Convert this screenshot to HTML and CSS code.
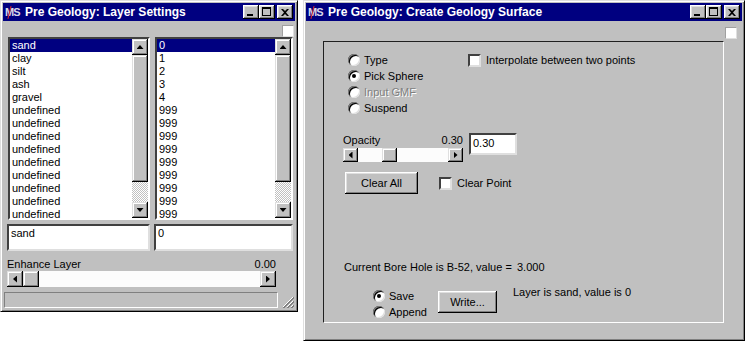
FILE: index.html
```html
<!DOCTYPE html>
<html lang="en">
<head>
    <meta charset="UTF-8">
    <meta name="viewport" content="width=device-width, initial-scale=1.0">
    <title>Pre Geology</title>
    <link rel="stylesheet" href="styles.css">
</head>
<body>
    <div class="desktop">
        <!-- Layer settings window -->
        <div class="window layerWindow">
            <div class="titleBar">
                <span class="appIcon">MS</span>
                <span class="titleText">Pre Geology: Layer Settings</span>
                <div class="titleButtons">
                    <span class="capButton minButton"></span>
                    <span class="capButton maxButton"></span>
                    <span class="capButton closeButton">
                        <svg width="8" height="7" viewBox="0 0 8 7"><path d="M0 0h2l2 2 2-2h2L5 3.5 8 7H6L4 5 2 7H0l3-3.5z"/></svg>
                    </span>
                </div>
            </div>
            <div class="client">
                <span class="cornerBox"></span>
                <div class="listRow">
                    <div class="listBox nameList">
                        <ul class="listItems">
                            <li class="selected">sand</li>
                            <li>clay</li>
                            <li>silt</li>
                            <li>ash</li>
                            <li>gravel</li>
                            <li>undefined</li>
                            <li>undefined</li>
                            <li>undefined</li>
                            <li>undefined</li>
                            <li>undefined</li>
                            <li>undefined</li>
                            <li>undefined</li>
                            <li>undefined</li>
                            <li>undefined</li>
                        </ul>
                        <div class="vScroll">
                            <span class="scrollBtn arrowUp"></span>
                            <span class="vThumb"></span>
                            <span class="ditherTrack"></span>
                            <span class="scrollBtn arrowDown"></span>
                        </div>
                    </div>
                    <div class="listBox valueList">
                        <ul class="listItems">
                            <li class="selected">0</li>
                            <li>1</li>
                            <li>2</li>
                            <li>3</li>
                            <li>4</li>
                            <li>999</li>
                            <li>999</li>
                            <li>999</li>
                            <li>999</li>
                            <li>999</li>
                            <li>999</li>
                            <li>999</li>
                            <li>999</li>
                            <li>999</li>
                        </ul>
                        <div class="vScroll">
                            <span class="scrollBtn arrowUp"></span>
                            <span class="vThumb"></span>
                            <span class="ditherTrack"></span>
                            <span class="scrollBtn arrowDown"></span>
                        </div>
                    </div>
                </div>
                <div class="editRow">
                    <div class="editBox nameEdit">sand</div>
                    <div class="editBox valueEdit">0</div>
                </div>
                <div class="sliderLabel enhanceLabel">
                    <span>Enhance Layer</span>
                    <span>0.00</span>
                </div>
                <div class="hScroll enhanceScroll">
                    <span class="scrollBtn arrowLeft"></span>
                    <span class="hThumb"></span>
                    <span class="hTrack"></span>
                    <span class="scrollBtn arrowRight"></span>
                </div>
                <div class="statusRow">
                    <div class="statusBar"></div>
                    <svg class="sizeGrip" width="12" height="12" viewBox="0 0 12 12">
                        <path d="M11 1L1 11M11 5L5 11M11 9L9 11" stroke="#fff" stroke-width="1"/>
                        <path d="M12 1L1 12M12 2L2 12M12 5L5 12M12 6L6 12M12 9L9 12M12 10L10 12" stroke="#808080" stroke-width="1"/>
                    </svg>
                </div>
            </div>
        </div>

        <!-- Create surface window -->
        <div class="window surfaceWindow">
            <div class="titleBar">
                <span class="appIcon">MS</span>
                <span class="titleText">Pre Geology: Create Geology Surface</span>
                <div class="titleButtons">
                    <span class="capButton minButton"></span>
                    <span class="capButton maxButton"></span>
                    <span class="capButton closeButton">
                        <svg width="8" height="7" viewBox="0 0 8 7"><path d="M0 0h2l2 2 2-2h2L5 3.5 8 7H6L4 5 2 7H0l3-3.5z"/></svg>
                    </span>
                </div>
            </div>
            <div class="client">
                <span class="cornerBox surfaceCorner"></span>
                <div class="frame">
                    <div class="modeRow">
                        <div class="radioGroup modeGroup">
                            <label class="radio"><span class="radioDot"></span>Type</label>
                            <label class="radio"><span class="radioDot checked"></span>Pick Sphere</label>
                            <label class="radio disabled"><span class="radioDot"></span>Input GMF</label>
                            <label class="radio"><span class="radioDot"></span>Suspend</label>
                        </div>
                        <label class="check interpolateCheck"><span class="checkBox"></span>Interpolate between two points</label>
                    </div>
                    <div class="opacityRow">
                        <div class="opacityBlock">
                            <div class="sliderLabel">
                                <span>Opacity</span>
                                <span>0.30</span>
                            </div>
                            <div class="hScroll opacityScroll">
                                <span class="scrollBtn arrowLeft"></span>
                                <span class="hTrack shortTrack"></span>
                                <span class="hThumb"></span>
                                <span class="hTrack"></span>
                                <span class="scrollBtn arrowRight"></span>
                            </div>
                        </div>
                        <div class="editBox opacityEdit">0.30</div>
                    </div>
                    <div class="clearRow">
                        <span class="pushButton clearButton">Clear All</span>
                        <label class="check clearCheck"><span class="checkBox"></span>Clear Point</label>
                    </div>
                    <div class="boreRow">
                        <span class="boreLabel">Current Bore Hole is B-52, value =</span>
                        <span>3.000</span>
                    </div>
                    <div class="saveRow">
                        <div class="radioGroup saveGroup">
                            <label class="radio"><span class="radioDot checked"></span>Save</label>
                            <label class="radio"><span class="radioDot"></span>Append</label>
                        </div>
                        <span class="pushButton writeButton">Write...</span>
                        <span class="layerInfo">Layer is sand, value is 0</span>
                    </div>
                </div>
            </div>
        </div>
    </div>
</body>
</html>
```

FILE: styles.css
```css
body {
    margin: 0;
    background: #fff;
    font-family: "Liberation Sans", Arial, sans-serif;
    font-size: 11px;
    color: #000;
}
.desktop {
    display: flex;
    align-items: flex-start;
    gap: 5px;
}
/* Win95 style window frame */
.window {
    box-sizing: border-box;
    background: #c0c0c0;
    border: 1px solid;
    border-color: #dfdfdf #000 #000 #dfdfdf;
    box-shadow: inset 1px 1px #fff, inset -1px -1px #808080;
    padding: 2px;
    display: flex;
    flex-direction: column;
}
.layerWindow {
    width: 298px;
    height: 312px;
}
.surfaceWindow {
    width: 442px;
    height: 341px;
}
.titleBar {
    height: 18px;
    background: #000080;
    color: #fff;
    display: flex;
    align-items: center;
    padding: 0 2px 0 2px;
}
.appIcon {
    width: 18px;
    font-weight: bold;
    font-size: 11px;
    letter-spacing: -1px;
    color: #d8d8e8;
    position: relative;
}
.appIcon::after {
    content: '';
    position: absolute;
    left: 4px;
    top: 0;
    width: 1px;
    height: 13px;
    background: #e02828;
    transform: rotate(14deg);
}
.titleText {
    margin-left: 2px;
    font-weight: bold;
    font-size: 12px;
}
.titleButtons {
    margin-left: auto;
    display: flex;
}
.capButton {
    width: 16px;
    height: 14px;
    box-sizing: border-box;
    background: #c0c0c0;
    box-shadow: inset -1px -1px #000, inset 1px 1px #fff, inset -2px -2px #808080, inset 2px 2px #dfdfdf;
    display: flex;
    align-items: center;
    justify-content: center;
    position: relative;
}
.minButton::after {
    content: '';
    position: absolute;
    left: 4px;
    top: 9px;
    width: 6px;
    height: 2px;
    background: #000;
}
.maxButton::after {
    content: '';
    position: absolute;
    left: 3px;
    top: 2px;
    width: 9px;
    height: 9px;
    box-sizing: border-box;
    border: 1px solid #000;
    border-top-width: 2px;
}
.closeButton {
    margin-left: 2px;
}
.client {
    display: flex;
    flex-direction: column;
}
.cornerBox {
    align-self: flex-end;
    width: 12px;
    height: 12px;
    box-sizing: border-box;
    margin: 4px 1px 0 0;
    background: #fff;
    border: 1px solid;
    border-color: #a0a0a0 #dfdfdf #dfdfdf #a0a0a0;
}
.surfaceCorner {
    margin: 6px 5px 0 0;
}
/* list boxes */
.listRow {
    display: flex;
    gap: 5px;
    margin-left: 5px;
}
.listBox {
    height: 183px;
    box-sizing: border-box;
    background: #fff;
    border: 2px solid;
    border-color: #404040 #fff #fff #404040;
    display: flex;
}
.nameList {
    width: 142px;
}
.valueList {
    width: 138px;
}
.listItems {
    list-style: none;
    margin: 0;
    padding: 0;
    flex: 1;
}
.listItems li {
    height: 13px;
    line-height: 13px;
    padding-left: 2px;
}
.listItems li.selected {
    background: #000080;
    color: #fff;
}
.vScroll {
    width: 16px;
    display: flex;
    flex-direction: column;
}
.scrollBtn {
    width: 16px;
    height: 16px;
    box-sizing: border-box;
    background: #c0c0c0;
    box-shadow: inset -1px -1px #000, inset 1px 1px #dfdfdf, inset -2px -2px #808080, inset 2px 2px #fff;
    display: flex;
    align-items: center;
    justify-content: center;
    flex-shrink: 0;
}
.scrollBtn::after {
    content: '';
    background: #000;
}
.arrowUp::after {
    width: 7px;
    height: 4px;
    clip-path: polygon(50% 0, 100% 100%, 0 100%);
}
.arrowDown::after {
    width: 7px;
    height: 4px;
    clip-path: polygon(0 0, 100% 0, 50% 100%);
}
.arrowLeft::after {
    width: 4px;
    height: 7px;
    clip-path: polygon(100% 0, 100% 100%, 0 50%);
}
.arrowRight::after {
    width: 4px;
    height: 7px;
    clip-path: polygon(0 0, 100% 50%, 0 100%);
}
.vThumb {
    height: 127px;
    background: #c0c0c0;
    box-shadow: inset -1px -1px #000, inset 1px 1px #dfdfdf, inset -2px -2px #808080, inset 2px 2px #fff;
}
.ditherTrack {
    flex: 1;
    background: repeating-conic-gradient(#fff 0 25%, #c0c0c0 0 50%) 0 0 / 2px 2px;
}
/* edit boxes */
.editRow {
    display: flex;
    gap: 4px;
    margin: 4px 0 0 4px;
}
.editBox {
    box-sizing: border-box;
    background: #fff;
    border: 2px solid;
    border-color: #404040 #dfdfdf #dfdfdf #404040;
    padding: 1px 2px;
    line-height: 13px;
}
.nameEdit {
    width: 143px;
    height: 27px;
}
.valueEdit {
    width: 139px;
    height: 27px;
}
.sliderLabel {
    display: flex;
    justify-content: space-between;
    align-items: center;
    height: 15px;
}
.enhanceLabel {
    width: 269px;
    margin: 5px 0 0 4px;
}
.hScroll {
    display: flex;
    height: 16px;
}
.enhanceScroll {
    width: 269px;
    margin-left: 4px;
}
.hThumb {
    width: 16px;
    flex-shrink: 0;
    background: #c0c0c0;
    box-shadow: inset -1px -1px #000, inset 1px 1px #dfdfdf, inset -2px -2px #808080, inset 2px 2px #fff;
}
.hTrack {
    flex: 1;
    background: #fcfcfc;
}
.statusRow {
    display: flex;
    align-items: flex-end;
    margin: 5px 0 0 1px;
}
.statusBar {
    width: 274px;
    height: 16px;
    box-sizing: border-box;
    border: 1px solid;
    border-color: #808080 #fff #fff #808080;
}
.sizeGrip {
    margin-left: 4px;
}
/* surface dialog */
.frame {
    box-sizing: border-box;
    width: 401px;
    height: 282px;
    margin: 2px 0 0 17px;
    border: 1px solid;
    border-color: #202020 #fff #fff #202020;
    display: flex;
    flex-direction: column;
}
.modeRow {
    display: flex;
    margin: 10px 0 0 24px;
}
.radioGroup {
    display: flex;
    flex-direction: column;
}
.modeGroup {
    width: 120px;
}
.radio, .check {
    display: flex;
    align-items: center;
    height: 16px;
    gap: 4px;
}
.radioDot {
    width: 12px;
    height: 12px;
    border-radius: 50%;
    background: #fff;
    box-shadow: inset 1px 1px #808080, inset -1px -1px #dfdfdf, inset 2px 2px #000;
    position: relative;
}
.radioDot.checked::after {
    content: '';
    position: absolute;
    left: 4px;
    top: 4px;
    width: 4px;
    height: 4px;
    border-radius: 50%;
    background: #000;
}
.radio.disabled {
    color: #808080;
    text-shadow: 1px 1px #fff;
}
.checkBox {
    width: 13px;
    height: 13px;
    box-sizing: border-box;
    background: #fff;
    border: 2px solid;
    border-color: #404040 #dfdfdf #dfdfdf #404040;
}
.check {
    gap: 5px;
}
.opacityRow {
    display: flex;
    align-items: flex-start;
    margin: 16px 0 0 19px;
}
.opacityBlock {
    width: 120px;
}
.opacityScroll {
    height: 14px;
    margin-top: 1px;
}
.opacityScroll .scrollBtn {
    width: 15px;
    height: 14px;
}
.opacityScroll .hThumb {
    width: 15px;
}
.shortTrack {
    flex: 0 0 24px;
}
.opacityEdit {
    width: 48px;
    height: 22px;
    margin: 1px 0 0 6px;
    padding: 2px 2px;
}
.clearRow {
    display: flex;
    align-items: center;
    margin: 10px 0 0 21px;
}
.pushButton {
    box-sizing: border-box;
    height: 22px;
    background: #c0c0c0;
    box-shadow: inset -1px -1px #000, inset 1px 1px #fff, inset -2px -2px #808080, inset 2px 2px #dfdfdf;
    display: flex;
    align-items: center;
    justify-content: center;
}
.clearButton {
    width: 73px;
}
.clearCheck {
    margin-left: 21px;
}
.boreRow {
    display: flex;
    height: 14px;
    align-items: center;
    margin: 66px 0 0 20px;
}
.boreLabel {
    width: 173px;
}
.saveRow {
    display: flex;
    align-items: flex-start;
    margin: 14px 0 0 49px;
}
.saveGroup {
    width: 65px;
}
.writeButton {
    width: 59px;
    margin-top: 3px;
}
.layerInfo {
    margin: -3px 0 0 16px;
    line-height: 14px;
}
```
